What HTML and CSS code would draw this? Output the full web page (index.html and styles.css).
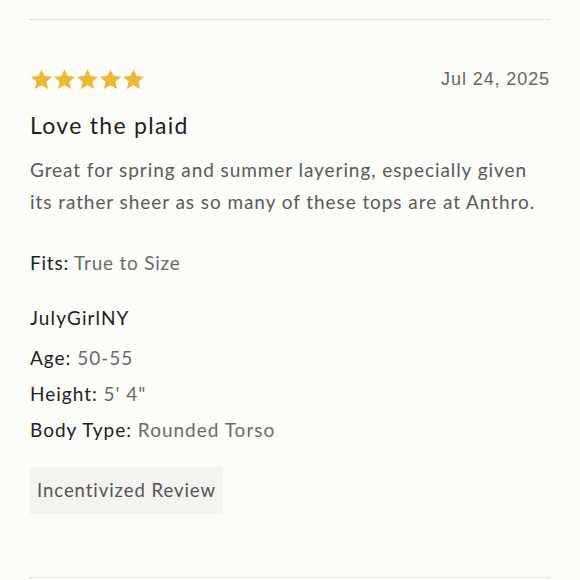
FILE: index.html
```html
<!DOCTYPE html>
<html lang="en">
<head>
<meta charset="utf-8">
<link rel="stylesheet" href="styles.css">
</head>
<body>
<article class="review">
  <div class="review-head">
    <div class="stars" aria-label="5 out of 5 stars">
      <svg class="star" viewBox="0 0 24 24"><path d="M12 1.2l3.2 7.2 7.8.7-5.9 5.2 1.8 7.7L12 18l-6.9 4 1.8-7.7L1 9.1l7.8-.7z"/></svg>
      <svg class="star" viewBox="0 0 24 24"><path d="M12 1.2l3.2 7.2 7.8.7-5.9 5.2 1.8 7.7L12 18l-6.9 4 1.8-7.7L1 9.1l7.8-.7z"/></svg>
      <svg class="star" viewBox="0 0 24 24"><path d="M12 1.2l3.2 7.2 7.8.7-5.9 5.2 1.8 7.7L12 18l-6.9 4 1.8-7.7L1 9.1l7.8-.7z"/></svg>
      <svg class="star" viewBox="0 0 24 24"><path d="M12 1.2l3.2 7.2 7.8.7-5.9 5.2 1.8 7.7L12 18l-6.9 4 1.8-7.7L1 9.1l7.8-.7z"/></svg>
      <svg class="star" viewBox="0 0 24 24"><path d="M12 1.2l3.2 7.2 7.8.7-5.9 5.2 1.8 7.7L12 18l-6.9 4 1.8-7.7L1 9.1l7.8-.7z"/></svg>
    </div>
    <span class="date">Jul 24, 2025</span>
  </div>
  <h3 class="title">Love the plaid</h3>
  <p class="body">Great for spring and summer layering, especially given its rather sheer as so many of these tops are at Anthro.</p>
  <p class="fits"><span class="label">Fits:</span> <span class="value">True to Size</span></p>
  <p class="author">JulyGirlNY</p>
  <ul class="attrs">
    <li><span class="label">Age:</span> <span class="value">50-55</span></li>
    <li><span class="label">Height:</span> <span class="value">5' 4"</span></li>
    <li><span class="label">Body Type:</span> <span class="value">Rounded Torso</span></li>
  </ul>
  <span class="badge">Incentivized Review</span>
</article>
</body>
</html>
```

FILE: styles.css
```css
html, body {
  margin: 0;
  padding: 0;
  background: #fcfcf8;
}
body {
  font-family: "Lato", "Noto Sans", sans-serif;
  color: #222;
}
.review {
  margin: 19px 30px 0;
  padding: 48px 0 63px;
  border-top: 1px dotted #cfcfcb;
  border-bottom: 1px dotted #cfcfcb;
  display: flex;
  flex-direction: column;
  align-items: flex-start;
}
.review-head {
  align-self: stretch;
  display: flex;
  justify-content: space-between;
  align-items: center;
  height: 22px;
}
.stars {
  display: flex;
}
.star {
  width: 23px;
  height: 23px;
  fill: #ebb935;
  display: block;
}
.date {
  font-family: "Liberation Sans", Arial, sans-serif;
  font-size: 18px;
  letter-spacing: 0.9px;
  color: #666;
  line-height: 22px;
}
.title {
  margin: 20px 0 0;
  font-size: 23px;
  line-height: 30px;
  font-weight: 400;
  letter-spacing: 1.3px;
  color: #1e1e1e;
}
.body {
  margin: 14px 0 0;
  font-size: 19px;
  line-height: 32px;
  letter-spacing: 0.93px;
  color: #5a5a5a;
}
.fits {
  margin: 31px 0 0;
  font-size: 19px;
  line-height: 28px;
  letter-spacing: 0.78px;
}
.label {
  color: #222;
}
.value {
  color: #6a6a6a;
}
.author {
  margin: 27px 0 0;
  font-size: 19px;
  line-height: 28px;
  letter-spacing: 1.1px;
  color: #1e1e1e;
}
.attrs {
  list-style: none;
  margin: 8px 0 0;
  padding: 0;
  font-size: 19px;
  line-height: 36px;
  letter-spacing: 1px;
}
.badge {
  margin-top: 19px;
  background: #f4f3ef;
  padding: 0 7px;
  line-height: 47px;
  font-size: 18.5px;
  letter-spacing: 0.95px;
  color: #555;
}
```
